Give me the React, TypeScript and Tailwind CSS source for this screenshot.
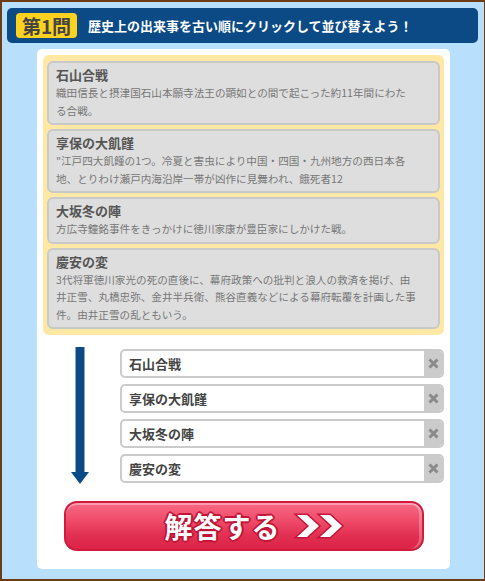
import React from "react";

const font = { fontFamily: '"Noto Sans CJK JP", "Noto Sans", sans-serif' };

const cards: { title: string; lines: string[] }[] = [
  {
    title: "石山合戦",
    lines: ["織田信長と摂津国石山本願寺法王の顕如との間で起こった約11年間にわた", "る合戦。"],
  },
  {
    title: "享保の大飢饉",
    lines: ["\"江戸四大飢饉の1つ。冷夏と害虫により中国・四国・九州地方の西日本各", "地、とりわけ瀬戸内海沿岸一帯が凶作に見舞われ、餓死者12"],
  },
  {
    title: "大坂冬の陣",
    lines: ["方広寺鐘銘事件をきっかけに徳川家康が豊臣家にしかけた戦。"],
  },
  {
    title: "慶安の変",
    lines: [
      "3代将軍徳川家光の死の直後に、幕府政策への批判と浪人の救済を掲げ、由",
      "井正雪、丸橋忠弥、金井半兵衛、熊谷直義などによる幕府転覆を計画した事",
      "件。由井正雪の乱ともいう。",
    ],
  },
];

const answers = ["石山合戦", "享保の大飢饉", "大坂冬の陣", "慶安の変"];

function XIcon() {
  return (
    <svg width="11" height="11" viewBox="0 0 11 11">
      <path d="M1.5 1.5 L9.5 9.5 M9.5 1.5 L1.5 9.5" stroke="#8a8a8a" strokeWidth="3" strokeLinecap="butt" />
    </svg>
  );
}

function Chevrons() {
  return (
    <svg width="48" height="26" viewBox="0 0 48 26" className="overflow-visible">
      <g stroke="#c4163a" strokeWidth="3" strokeLinejoin="miter" fill="white" paintOrder="stroke">
        <polygon points="1,2 11,2 23,13 11,24 1,24 13,13" />
        <polygon points="24,2 34,2 46,13 34,24 24,24 36,13" />
      </g>
    </svg>
  );
}

export default function App() {
  return (
    <div
      className="w-[485px] h-[581px] bg-[#b8dffc] border-l-2 border-t-2 border-r border-b-2 border-[#6e3c14] overflow-hidden"
      style={font}
    >
      {/* Header */}
      <div className="ml-[5px] mt-[6px] w-[471px] h-[35px] rounded-[5px] bg-[#0b4a85] flex items-center pl-[9px]">
        <div className="w-[61px] h-[25px] rounded-[4px] bg-[#fcd21e] flex items-center justify-center text-[19px] font-bold text-[#444] leading-none">
          第1問
        </div>
        <div className="ml-[11px] text-white text-[13px] font-bold leading-none">
          歴史上の出来事を古い順にクリックして並び替えよう！
        </div>
      </div>

      {/* Panel */}
      <div className="ml-[35px] mt-[6px] w-[413px] h-[520px] bg-white rounded-[5px] p-[6px] pb-[20px]">
        <div className="bg-[#fee8a3] rounded-[6px] px-[4px] pt-[6px] pb-[6px] flex flex-col gap-[4px]">
          {cards.map((c) => (
            <div
              key={c.title}
              className="bg-[#dedede] border-2 border-[#c9c9c9] rounded-[6px] pl-[7px] pr-[5px] pt-[3px] pb-[4px]"
            >
              <div className="text-[13px] font-bold text-[#555] leading-[18px]">{c.title}</div>
              {c.lines.map((l, i) => (
                <div key={i} className="text-[10.6px] text-[#777] leading-[17.5px] whitespace-nowrap">
                  {l}
                </div>
              ))}
            </div>
          ))}
        </div>

        <div className="flex items-start mt-[14px]">
          <div className="w-[77px] pl-[28px] -mt-[2px]">
            <svg width="18" height="137" viewBox="0 0 18 137">
              <rect x="4.5" y="0" width="9" height="125" fill="#0b4a85" />
              <polygon points="0,125 18,125 9,137" fill="#0b4a85" />
            </svg>
          </div>
          <div className="flex-1 flex flex-col gap-[6px]">
            {answers.map((a) => (
              <div key={a} className="h-[29px] flex border-2 border-[#cbcbcb] rounded-[5px] overflow-hidden bg-white">
                <div className="flex-1 flex items-center pl-[7px] text-[13px] font-bold text-[#444]">{a}</div>
                <div className="w-[18px] bg-[#cbcbcb] flex items-center justify-center">
                  <XIcon />
                </div>
              </div>
            ))}
          </div>
        </div>

        <div className="ml-[21px] mt-[17px] w-[360px] h-[50px] rounded-[13px] border-2 border-[#d11a3e] bg-[linear-gradient(to_bottom,#f76a85_0%,#ef4a68_40%,#e23052_70%,#dc2347_100%)] shadow-[inset_0_2px_0_rgba(255,255,255,0.35),inset_-3px_0_0_rgba(255,255,255,0.25)] flex items-center justify-center gap-[15px] pl-[20px]">
          <span className="text-white text-[28px] font-bold leading-none tracking-[1px] [text-shadow:0_0_2px_#b8102f,1px_1px_0_#c4163a,-1px_-1px_0_#c4163a,1px_-1px_0_#c4163a,-1px_1px_0_#c4163a,2px_0_0_#c4163a,-2px_0_0_#c4163a,0_2px_0_#c4163a,0_-2px_0_#c4163a]">
            解答する
          </span>
          <Chevrons />
        </div>
      </div>
    </div>
  );
}
